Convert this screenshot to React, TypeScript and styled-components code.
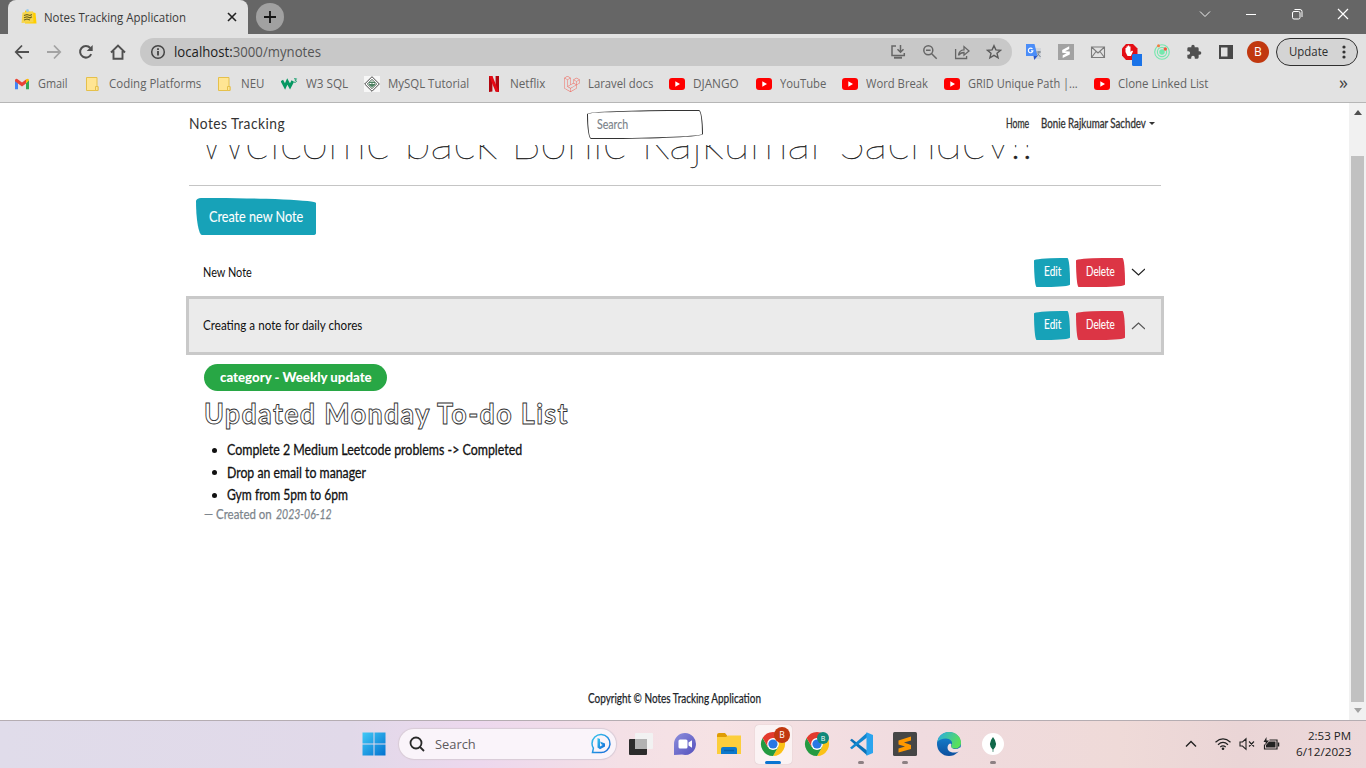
import React, { useLayoutEffect, useRef, useState } from "react";
import styled, { createGlobalStyle, css } from "styled-components";
import { FaLaravel } from "react-icons/fa";
import { VscVscode } from "react-icons/vsc";

const Global = createGlobalStyle`
  * { box-sizing: border-box; }
  html, body { margin: 0; padding: 0; overflow: hidden; }
  body { font-family: "Open Sans", "Noto Sans", sans-serif; width: 1366px; height: 768px; }
  svg { display: block; flex: none; }
`;

/* ---------- text that condenses to a given width ---------- */
const FitBox = styled.span<{ $w: number }>`
  display: inline-block;
  flex: none;
  width: ${(p) => p.$w}px;
  white-space: nowrap;
`;
const FitInner = styled.span`
  display: inline-block;
  transform-origin: 0 50%;
`;
function Fit({ w, children }: { w: number; children: React.ReactNode }) {
  const ref = useRef<HTMLSpanElement>(null);
  const [scale, setScale] = useState(1);
  useLayoutEffect(() => {
    if (ref.current) setScale(w / ref.current.offsetWidth);
  }, [w]);
  return (
    <FitBox $w={w}>
      <FitInner ref={ref} style={{ transform: `scaleX(${scale})` }}>
        {children}
      </FitInner>
    </FitBox>
  );
}

/* ---------- window frame ---------- */
const Screen = styled.div`
  width: 1366px;
  height: 768px;
  display: flex;
  flex-direction: column;
  background: #fff;
  overflow: hidden;
`;
const TitleBar = styled.div`
  height: 34px;
  flex: none;
  background: #666;
  display: flex;
  padding-left: 8px;
`;
const Tab = styled.div`
  width: 240px;
  height: 34px;
  background: #e2e2e2;
  border-radius: 8px 8px 0 0;
  display: flex;
  align-items: center;
  padding: 0 10px 0 13px;
  font-size: 12px;
  color: #3a3a3a;
  svg:last-child { margin-left: auto; }
  & > span { margin-left: 7px; }
`;
const NewTab = styled.div`
  width: 28px;
  height: 28px;
  margin: 3px 0 0 8px;
  border-radius: 50%;
  background: #a1a1a1;
  display: grid;
  place-items: center;
`;
const WindowControls = styled.div`
  margin-left: auto;
  height: 28px;
  display: grid;
  grid-template-columns: repeat(4, 46px);
  place-items: center;
`;
const ToolBar = styled.div`
  height: 35px;
  flex: none;
  background: #e2e2e2;
  display: flex;
  align-items: center;
  padding-left: 6px;
`;
const IconCell = styled.div`
  width: 32px;
  height: 28px;
  flex: none;
  display: grid;
  place-items: center;
`;
const Omnibox = styled.div`
  width: 872px;
  height: 28px;
  margin: 0 6px 0 6px;
  border-radius: 14px;
  background: #c8c8c8;
  display: flex;
  align-items: center;
  padding: 0 2px;
  font-size: 14px;
  color: #555;
  b { font-weight: 400; color: #1d1d1d; }
  ${IconCell}:nth-of-type(2) { margin-left: auto; }
`;
const Avatar = styled.div`
  width: 22px;
  height: 22px;
  border-radius: 50%;
  background: #c1380f;
  color: #fff;
  font-size: 12px;
  display: grid;
  place-items: center;
`;
const UpdatePill = styled.div`
  width: 82px;
  height: 28px;
  margin-left: 2px;
  border: 1px solid #2f2f2f;
  border-radius: 14px;
  background: #d4d4d4;
  display: flex;
  align-items: center;
  padding-left: 12px;
  gap: 14px;
  font-size: 12px;
  color: #2e2e2e;
`;
const Bookmarks = styled.div`
  height: 34px;
  flex: none;
  background: #e2e2e2;
  border-bottom: 1px solid #b6b6b6;
  display: flex;
  align-items: center;
  gap: 16px;
  padding: 0 18px 4px 14px;
`;
const Bookmark = styled.div`
  display: flex;
  align-items: center;
  gap: 8px;
  font-size: 12px;
  color: #636363;
`;
const More = styled.div`
  margin-left: auto;
  padding-bottom: 3px;
  font-size: 18px;
  line-height: 16px;
  color: #444;
`;

/* ---------- web page ---------- */
const Viewport = styled.div`
  height: 617px;
  flex: none;
  display: flex;
`;
const Page = styled.main`
  width: 1349px;
  display: flex;
  flex-direction: column;
  font-family: Lato, "Open Sans", sans-serif;
  color: #212529;
  overflow: hidden;
`;
const NavBar = styled.nav`
  height: 42px;
  flex: none;
  display: flex;
  align-items: center;
  padding: 0 194px 0 189px;
  background: #fff;
  z-index: 1;
`;
const Brand = styled.div`
  width: 398px;
  padding-bottom: 2px;
  font-size: 14.5px;
  letter-spacing: 0.5px;
  color: #333;
`;
const sketch = css`
  border-radius: 255px 25px 225px 25px / 25px 225px 25px 255px;
`;
const wideSketch = css`
  border-radius: 5px 112px 3px 6px / 3px 5px 2px 34px;
`;
const SearchInput = styled.div`
  width: 116px;
  height: 29px;
  border: 1px solid #333;
  border-radius: 100px 4px 100px 4px / 4px 24px 5px 24px;
  padding: 0 9px 1px;
  display: flex;
  align-items: center;
  font-size: 13px;
  color: #7b838a;
  -webkit-text-stroke: 0.15px #7b838a;
`;
const NavLinks = styled.div`
  margin-left: auto;
  display: flex;
  align-items: center;
  padding-bottom: 2px;
  font-size: 12.5px;
  color: #333;
  -webkit-text-stroke: 0.3px #333;
`;
const LinkGap = styled.i`
  width: 12px;
`;
const Caret = styled.i`
  margin-left: 3px;
  border: 3px solid transparent;
  border-top-color: #333;
  border-bottom: 0;
`;
const Scroller = styled.div`
  flex: 1;
  overflow: hidden;
  padding: 0 186px;
  display: flex;
  flex-direction: column;
`;
const Welcome = styled.h1`
  margin: -32px 0 0;
  padding-left: 13px;
  height: 72px;
  font-size: 47px;
  line-height: 56px;
  font-weight: 100;
  color: #222;
  -webkit-text-stroke: 0.35px #222;
`;
const Rule = styled.hr`
  width: 972px;
  height: 1px;
  margin: 0 3px 12px;
  border: 0;
  flex: none;
  background: #c5c5c5;
`;
const Button = styled.button<{ $kind: "info" | "danger"; $w: number; $big?: boolean }>`
  ${(p) => (p.$big ? wideSketch : sketch)}
  width: ${(p) => p.$w}px;
  height: ${(p) => (p.$big ? 37 : 29)}px;
  flex: none;
  padding: 0 0 2px;
  border: 0;
  color: #fff;
  background: ${(p) => (p.$kind === "info" ? "#17a2b8" : "#dc3545")};
  font-family: inherit;
  font-size: ${(p) => (p.$big ? 16 : 12.5)}px;
  -webkit-text-stroke: 0.1px #fff;
`;
const CreateArea = styled.div`
  padding-left: 10px;
  height: 50px;
  flex: none;
`;
const NoteRow = styled.div<{ $open?: boolean }>`
  height: ${(p) => (p.$open ? 59 : 48)}px;
  width: 978px;
  flex: none;
  border: 3px solid ${(p) => (p.$open ? "#c9c9c9" : "transparent")};
  background: ${(p) => (p.$open ? "#ebebeb" : "#fff")};
  display: flex;
  align-items: center;
  gap: 6px;
  padding: 0 16px 0 14px;
  font-size: 14px;
  color: #111;
  & > span { margin-right: auto; padding-bottom: 2px; }
`;
const NoteBody = styled.section`
  padding: 9px 18px 0;
  display: flex;
  flex-direction: column;
  align-items: flex-start;
`;
const Badge = styled.div`
  width: 183px;
  height: 27px;
  padding-bottom: 2px;
  border-radius: 14px;
  background: #28a745;
  color: #fff;
  font-size: 13.5px;
  font-weight: 900;
  display: grid;
  place-items: center;
`;
const NoteTitle = styled.h2`
  margin: 3px 0 0;
  font-size: 28px;
  letter-spacing: 1.4px;
  line-height: 38px;
  font-weight: 700;
  color: #fff;
  -webkit-text-stroke: 0.9px #333;
`;
const NoteList = styled.ul`
  margin: 7px 0 0;
  padding: 0;
  list-style: none;
  font-size: 15px;
  line-height: 22.6px;
  color: #111;
  -webkit-text-stroke: 0.3px #111;
`;
const NoteItem = styled.li`
  display: flex;
  align-items: center;
  height: 22.6px;
  & > span { padding-bottom: 1px; line-height: 21px; }
  &::before {
    content: "";
    width: 5px;
    height: 5px;
    margin: 0 10px 0 8px;
    border-radius: 50%;
    background: #111;
  }
`;
const Created = styled.footer`
  display: flex;
  gap: 4px;
  margin-top: -1px;
  font-size: 13.5px;
  line-height: 16px;
  color: #7d858c;
  -webkit-text-stroke: 0.25px #7d858c;
`;
const Copyright = styled.footer`
  margin-top: auto;
  height: 31px;
  padding-left: 402px;
  font-size: 12.5px;
  line-height: 20px;
  color: #212529;
  -webkit-text-stroke: 0.25px #212529;
`;
const ScrollBar = styled.div`
  width: 17px;
  background: #f1f1f1;
  display: flex;
  flex-direction: column;
  align-items: center;
  padding: 7px 0;
`;
const ScrollArrow = styled.i<{ $down?: boolean }>`
  border: 4px solid transparent;
  ${(p) => (p.$down ? "border-top: 5px solid #a3a3a3; border-bottom: 0;" : "border-bottom: 5px solid #505050; border-top: 0;")}
`;
const Thumb = styled.div`
  width: 13px;
  height: 546px;
  margin: 41px 0 6px;
  background: #c1c1c1;
`;

/* ---------- taskbar ---------- */
const TaskBar = styled.div`
  height: 48px;
  border-top: 1px solid #b5adb2;
  background: linear-gradient(90deg, #e0dcea 0, #e1d9e9 350px, #edd8ee 480px, #f4e0e6 620px, #f6e2e4 720px, #f0dbdf 920px, #efdad8 1120px, #ead5d6 1240px, #ecd8da 1366px);
  display: flex;
  align-items: center;
  padding: 0 0 1px 352px;
`;
const TaskSlot = styled.div<{ $active?: boolean }>`
  position: relative;
  width: 44px;
  height: 46px;
  display: grid;
  place-items: center;
  &::before {
    content: "";
    display: ${(p) => (p.$active ? "block" : "none")};
    position: absolute;
    inset: 4px 3px 3px 4px;
    border-radius: 4px;
    background: rgba(255, 255, 255, 0.6);
    box-shadow: 0 0 1px #b9a8ab;
  }
  svg { position: relative; }
`;
const Running = styled.i<{ $active?: boolean }>`
  position: absolute;
  bottom: 3px;
  left: ${(p) => (p.$active ? 14 : 19)}px;
  width: ${(p) => (p.$active ? 16 : 6)}px;
  height: 3px;
  border-radius: 2px;
  background: ${(p) => (p.$active ? "#0a74d1" : "#8d8083")};
`;
const TaskSearch = styled.div`
  width: 217px;
  height: 30px;
  margin: 0 3px 0 3px;
  border-radius: 16px;
  background: #faf4fa;
  box-shadow: 0 0 1px 1px #d8cbd6;
  display: flex;
  align-items: center;
  padding: 0 4px 0 10px;
  gap: 10px;
  font-size: 13.5px;
  color: #5d5a5d;
  svg:last-child { margin-left: auto; }
`;
const Tray = styled.div`
  margin-left: auto;
  padding-right: 15px;
  display: flex;
  align-items: center;
`;
const Clock = styled.div`
  margin-left: 16px;
  display: flex;
  flex-direction: column;
  align-items: flex-end;
  font-size: 11.5px;
  line-height: 16px;
  color: #222;
`;

/* ---------- icons ---------- */
type StrokeProps = { s?: number; c?: string; w?: number; box?: number; children: React.ReactNode };
const Stroke = ({ s = 16, c = "#505050", w = 1.8, box = 16, children }: StrokeProps) => (
  <svg width={s} height={s} viewBox={`0 0 ${box} ${box}`} fill="none" stroke={c} strokeWidth={w}>
    {children}
  </svg>
);
const YouTube = () => (
  <svg width="16" height="16" viewBox="0 0 16 16">
    <rect y="2" width="16" height="12" rx="3" fill="#f00" />
    <path d="M6.3 5.3v5.4L11 8z" fill="#fff" />
  </svg>
);
const Folder = () => (
  <svg width="16" height="16" viewBox="0 0 16 16">
    <path d="M1.5 1.500h10.500v9h1v4h-11.500z" fill="#ffe593" stroke="#e5c04b" />
    <path d="M10.500 14.500v-4H13v4z" fill="#ffe593" stroke="#e5c04b" />
  </svg>
);
const Gmail = () => (
  <svg width="16" height="16" viewBox="0 0 16 16">
    <path d="M1 4v9.2h3V7z" fill="#4285f4" />
    <path d="M12 7v6.2h3V4z" fill="#34a853" />
    <path d="M1 4.5Q1 2.2 3.3 2.9L8 6.6l4-3.2v4L8 10.4 1 5.2z" fill="#ea4335" />
    <path d="M12 3.3Q15 1.5 15 4.6L12 7.2z" fill="#fbbc04" />
  </svg>
);
const W3 = () => (
  <svg width="17" height="16" viewBox="0 0 17 16" fill="none" stroke="#059862">
    <path d="M.8 4.500 4 10.500 6.300 5.500 9 10.500 11.800 5" strokeWidth="2.900" />
    <path d="M13 2.800h2.500l-1.300 1.500c2.200 0 1.300 2.800-1.200 1.800" strokeWidth=".9" />
  </svg>
);
const MySql = () => (
  <svg width="16" height="16" viewBox="0 0 16 16">
    <rect width="16" height="16" fill="#f7f7f7" />
    <path d="M8 .7 15.3 8 8 15.3.7 8z" fill="#fff" stroke="#444" strokeWidth="1" />
    <path d="M8 3.200 12.800 8 8 12.800 3.200 8z" fill="#b9cdbf" stroke="#5d6a61" strokeWidth=".8" />
    <path d="M5 6h6v3L8 11 5 9z" fill="#4c8061" />
    <path d="M5.500 7h2v1h-2zm3 0h2v1h-2z" fill="#fff" />
  </svg>
);
const Netflix = () => (
  <svg width="16" height="16" viewBox="0 0 16 16">
    <path d="M3 0h3.400v15.500L3 16zM9.600 0H13v16l-3.400-.5z" fill="#b1060f" />
    <path d="M3 0h3.400L13 16l-3.500-.5z" fill="#e50914" />
  </svg>
);
const NoteFavicon = () => (
  <svg width="16" height="16" viewBox="0 0 16 16">
    <path d="M4 1.500 14.500 4l1 10.500L4 14.500z" fill="#ffcf00" />
    <path d="M1.500 3.500 12 2.200l.5 11L.5 14z" fill="#f6d54b" />
    <path d="m3 6.500 3-1 3 1 2-1M3 8.800l3-1 3 1 2-1M3 11l3-1 3 1" fill="none" stroke="#67601f" strokeWidth="1.100" />
    <circle cx="6.500" cy="1.600" r="1.500" fill="#9ccbea" />
  </svg>
);
const Chrome = ({ badge, label }: { badge: string; label: "lg" | "sm" }) => (
  <svg width="34" height="34" viewBox="0 0 34 34">
    <path d="M17 11h10.400a12 12 0 0 1-10.400 18l5.200-9z" fill="#fbc116" />
    <path d="M11.800 20 6.600 11A12 12 0 0 0 17 29l5.200-9z" fill="#249a41" />
    <path d="M6.600 11A12 12 0 0 1 27.400 11H17l-5.200 9z" fill="#e33b2e" />
    <circle cx="17" cy="17" r="5.900" fill="#fff" />
    <circle cx="17" cy="17" r="4.600" fill="#2877e4" />
    {label === "lg" ? (
      <>
        <circle cx="26" cy="8" r="8" fill={badge} />
        <text x="26" y="11" fontSize="8.500" fill="#fff" textAnchor="middle">B</text>
      </>
    ) : (
      <>
        <circle cx="23" cy="11" r="6" fill={badge} />
        <text x="23" y="13.500" fontSize="7" fill="#fff" textAnchor="middle">B</text>
      </>
    )}
  </svg>
);

const bookmarks: [React.ReactNode, string, number, number][] = [
  [<Gmail />, "Gmail", 30, 31],
  [<Folder />, "Coding Platforms", 92, 92],
  [<Folder />, "NEU", 23, 24],
  [<W3 />, "W3 SQL", 42, 42],
  [<MySql />, "MySQL Tutorial", 81, 82],
  [<Netflix />, "Netflix", 35, 38],
  [<FaLaravel size={16} color="#ef6a60" />, "Laravel docs", 65, 65],
  [<YouTube />, "DJANGO", 46, 47],
  [<YouTube />, "YouTube", 46, 46],
  [<YouTube />, "Word Break", 62, 62],
  [<YouTube />, "GRID Unique Path |...", 110, 110],
  [<YouTube />, "Clone Linked List", 90, 90],
];
const Slot = styled.div<{ $w: number }>`
  width: ${(p) => p.$w}px;
`;

function NoteHeader({ title, w, open }: { title: string; w: number; open?: boolean }) {
  return (
    <NoteRow $open={open}>
      <Fit w={w}>{title}</Fit>
      <Button $kind="info" $w={36}><Fit w={17}>Edit</Fit></Button>
      <Button $kind="danger" $w={49}><Fit w={29}>Delete</Fit></Button>
      <Stroke s={14} c={open ? "#555" : "#222"} w={1.2} box={14}>
        <path d={open ? "m1 10 6.500-6L14 10" : "m1 4 6.500 6L14 4"} />
      </Stroke>
    </NoteRow>
  );
}

export default function App() {
  return (
    <Screen>
      <Global />
      <TitleBar>
        <Tab>
          <NoteFavicon />
          <Fit w={142}>Notes Tracking Application</Fit>
          <Stroke s={12} c="#222" w={1.6} box={12}><path d="m2 2 8 8M10 2 2 10" /></Stroke>
        </Tab>
        <NewTab><Stroke s={14} c="#161616" w={1.8} box={14}><path d="M7 1v12M1 7h12" /></Stroke></NewTab>
        <WindowControls>
          <Stroke s={12} c="#eee" w={1} box={12}><path d="m1 3.500 5 5 5-5" /></Stroke>
          <Stroke s={12} c="#fff" w={1} box={12}><path d="M1 6.500h10" /></Stroke>
          <Stroke s={12} c="#fff" w={1} box={12}>
            <rect x="1.500" y="3.500" width="7.500" height="7.500" rx="1.500" />
            <path d="M3.500 1.500H9q2 0 2 2V9" />
          </Stroke>
          <Stroke s={12} c="#fff" w={1.2} box={12}><path d="m1 1 10 10M11 1 1 11" /></Stroke>
        </WindowControls>
      </TitleBar>
      <ToolBar>
        <IconCell><Stroke><path d="M15 8H2M8 1.500 1.800 8 8 14.500" /></Stroke></IconCell>
        <IconCell><Stroke c="#a3a3a3"><path d="M1 8h13M8 1.500 14.200 8 8 14.500" /></Stroke></IconCell>
        <IconCell>
          <Stroke w={2}><path d="M13.200 10.200A5.800 5.800 0 1 1 12.300 4" /><path d="M14.700 1v6H8.700z" fill="#505050" stroke="none" /></Stroke>
        </IconCell>
        <IconCell><Stroke w={1.9}><path d="M1 8.500 8 1.600l7 6.900M3.500 7v7.800h9V7" /></Stroke></IconCell>
        <Omnibox>
          <IconCell>
            <Stroke c="#444" w={1.5}><circle cx="8" cy="8" r="6.300" /><path d="M8 7v4.500M8 4.300v1.600" strokeWidth="1.800" /></Stroke>
          </IconCell>
          <Fit w={147}><b>localhost:</b>3000/mynotes</Fit>
          <IconCell>
            <Stroke c="#666" w={1.5}>
              <path d="M6 2H2v9.500h12.300V9" /><path d="M4 13.700h8" strokeWidth="2" /><path d="M10.500 1v7M7.500 5.200l3 3 3-3" />
            </Stroke>
          </IconCell>
          <IconCell>
            <Stroke c="#666" w={1.5}><circle cx="6.300" cy="6.300" r="4.500" /><path d="m9.700 9.700 5 5M4 6.300h4.600" /></Stroke>
          </IconCell>
          <IconCell>
            <Stroke c="#666" w={1.3}>
              <path d="M1.600 5v9.500h11V12M4.500 11.400c.4-4 2.400-5.500 5.500-5.600V2.600l5 4.400-5 4.200V8.500C7.500 8.500 6 9 4.500 11.400z" />
            </Stroke>
          </IconCell>
          <IconCell>
            <Stroke c="#5a5a5a" w={1.4}><path d="m8 1.700 1.900 4.200 4.600.4-3.500 3 1.100 4.500L8 11.400 3.900 13.800 5 9.300l-3.500-3 4.600-.4z" /></Stroke>
          </IconCell>
        </Omnibox>
        <IconCell>
          <svg width="16" height="16" viewBox="0 0 16 16">
            <path d="M6 4h9v11H9z" fill="#d2d5da" />
            <path d="M0 0h8.500l3 12H0z" fill="#4b8df8" />
            <path d="M7.500 12h4l-3.300 4z" fill="#2a56c6" />
            <path d="M6.500 5a2.300 2.300 0 1 0 .4 1.900H5" stroke="#fff" fill="none" strokeWidth="1.100" />
            <path d="M10.500 8H15M13 7v1c0 2-1 3.500-2 4M11.500 9.500l3 3.500" stroke="#77808a" fill="none" />
          </svg>
        </IconCell>
        <IconCell>
          <svg width="16" height="16" viewBox="0 0 16 16">
            <rect width="16" height="16" fill="#a2a2a2" />
            <path d="m4.200 6 7-3.700v2.700L7 7.200l4.800.4v2.800L4.700 14v-2.700l4-2.100-4.500-.5z" fill="#fff" />
          </svg>
        </IconCell>
        <IconCell><Stroke c="#7b7b7b" w={1.1}><path d="M1.500 3h13v10.500h-13zM1.500 3 8 9l6.500-6M1.500 13.500 6 7.500M14.500 13.500 10 7.500" /></Stroke></IconCell>
        <IconCell>
          <svg width="24" height="28" viewBox="0 0 24 28">
            <path d="M8 6h7l4.500 4.500v6.500L15 22H8l-4-4.500v-7z" fill="#e40d14" />
            <path d="M7.500 14v-4h1v3V8.500h1.300V13 7.500h1.400V13 8.500h1.300V14l1.500-1.500 1 .8L13 18H9.500z" fill="#fff" />
            <rect x="14" y="16" width="12" height="12" rx="1.500" fill="#1a73e8" />
          </svg>
        </IconCell>
        <IconCell>
          <svg width="16" height="16" viewBox="0 0 16 16" fill="none" stroke="#73e8ad" strokeWidth="1.100">
            <circle cx="8" cy="8" r="7.300" /><circle cx="8" cy="8" r="4.600" /><circle cx="8" cy="8" r="2.200" fill="#73e8ad" />
            <circle cx="4.500" cy="1.700" r="1.500" fill="#f47b3e" stroke="none" /><circle cx="11.300" cy="5" r="1.700" fill="#f0583b" stroke="none" />
          </svg>
        </IconCell>
        <IconCell>
          <svg width="16" height="16" viewBox="0 0 24 24" fill="#505050">
            <path d="M20.500 11H19V7a2 2 0 0 0-2-2h-4V3.500a2.500 2.500 0 0 0-5 0V5H4a2 2 0 0 0-2 2v3.800h1.500a2.700 2.700 0 0 1 0 5.400H2V20a2 2 0 0 0 2 2h3.800v-1.500a2.700 2.700 0 0 1 5.400 0V22H17a2 2 0 0 0 2-2v-4h1.500a2.500 2.500 0 0 0 0-5z" />
          </svg>
        </IconCell>
        <IconCell>
          <svg width="16" height="16" viewBox="0 0 16 16" fill="#484848"><path fillRule="evenodd" d="M1 1h14v14H1zM3 3.500v9h6.500v-9z" /></svg>
        </IconCell>
        <IconCell><Avatar>B</Avatar></IconCell>
        <UpdatePill>
          <Fit w={39}>Update</Fit>
          <svg width="4" height="16" viewBox="0 0 4 16" fill="#333"><circle cx="2" cy="3" r="1.600" /><circle cx="2" cy="8" r="1.600" /><circle cx="2" cy="13" r="1.600" /></svg>
        </UpdatePill>
      </ToolBar>
      <Bookmarks>
        {bookmarks.map(([icon, label, w, slot]) => (
          <Bookmark key={label}>
            {icon}
            <Slot $w={slot}><Fit w={w}>{label}</Fit></Slot>
          </Bookmark>
        ))}
        <More>»</More>
      </Bookmarks>

      <Viewport>
        <Page>
          <NavBar>
            <Brand><Fit w={96}>Notes Tracking</Fit></Brand>
            <SearchInput><Fit w={31}>Search</Fit></SearchInput>
            <NavLinks>
              <Fit w={23}>Home</Fit>
              <LinkGap />
              <Fit w={105}>Bonie Rajkumar Sachdev</Fit>
              <Caret />
            </NavLinks>
          </NavBar>
          <Scroller>
            <Welcome><Fit w={834}>Welcome back Bonie Rajkumar Sachdev!!</Fit></Welcome>
            <Rule />
            <CreateArea>
              <Button $kind="info" $w={120} $big><Fit w={94}>Create new Note</Fit></Button>
            </CreateArea>
            <NoteHeader title="New Note" w={49} />
            <NoteHeader title="Creating a note for daily chores" w={159} open />
            <NoteBody>
              <Badge><Fit w={152}>category - Weekly update</Fit></Badge>
              <NoteTitle><Fit w={365}>Updated Monday To-do List</Fit></NoteTitle>
              <NoteList>
                <NoteItem><Fit w={295}>Complete 2 Medium Leetcode problems -&gt; Completed</Fit></NoteItem>
                <NoteItem><Fit w={139}>Drop an email to manager</Fit></NoteItem>
                <NoteItem><Fit w={121}>Gym from 5pm to 6pm</Fit></NoteItem>
              </NoteList>
              <Created>
                <Fit w={68}>— Created on</Fit>
                <Fit w={56}><em>2023-06-12</em></Fit>
              </Created>
            </NoteBody>
            <Copyright><Fit w={173}>Copyright © Notes Tracking Application</Fit></Copyright>
          </Scroller>
        </Page>
        <ScrollBar><ScrollArrow /><Thumb /><ScrollArrow $down /></ScrollBar>
      </Viewport>

      <TaskBar>
        <TaskSlot>
          <svg width="24" height="24" viewBox="0 0 24 24">
            <defs><linearGradient id="win" gradientUnits="userSpaceOnUse" x1="0" y1="0" x2="24" y2="24"><stop stopColor="#42cbf7" /><stop offset="1" stopColor="#0070cf" /></linearGradient></defs>
            <path d="M.5.5h11v11H.5zM12.500.5h11v11h-11zM.5 12.500h11v11H.5zM12.500 12.500h11v11h-11z" fill="url(#win)" />
          </svg>
        </TaskSlot>
        <TaskSearch>
          <Stroke s={16} c="#292929" w={1.8}><circle cx="7" cy="7" r="5.500" /><path d="m11 11 4 4" /></Stroke>
          <Fit w={41}>Search</Fit>
          <svg width="22" height="22" viewBox="0 0 22 22" fill="none">
            <defs><linearGradient id="bing" x2="1" y2="1"><stop stopColor="#35c5ed" /><stop offset="1" stopColor="#1466d8" /></linearGradient></defs>
            <path d="M2.500 19.500H10A9 9 0 1 0 2 10.500q0 2.300 1.400 4.600z" stroke="url(#bing)" strokeWidth="1.500" />
            <path d="M7.500 5v9.500l2.500 1.800 5-2.700v-3L10 8.500l1 2.600 1.600.8-2.600 1.600V6z" fill="url(#bing)" />
          </svg>
        </TaskSearch>
        <TaskSlot>
          <svg width="24" height="24" viewBox="0 0 24 24">
            <rect x="6" y="1" width="18" height="16" rx="1" fill="#f2f2f2" />
            <rect y="7" width="18" height="16" rx="1" fill="#2c2c2c" />
            <path d="M6 7h12v10H6z" fill="#b2b2b2" />
          </svg>
        </TaskSlot>
        <TaskSlot>
          <svg width="24" height="24" viewBox="0 0 24 24">
            <defs><linearGradient id="chat" x2="1" y2="1"><stop stopColor="#8d8fdc" /><stop offset="1" stopColor="#5550bd" /></linearGradient></defs>
            <path d="M12 1a11 11 0 1 1-3 21.600L1 23V12A11 11 0 0 1 12 1z" fill="url(#chat)" />
            <rect x="5.500" y="7.500" width="9" height="9" rx="1.500" fill="#fff" /><path d="m15.500 10.500 3.500-2.300v7.600l-3.500-2.300z" fill="#fff" />
          </svg>
        </TaskSlot>
        <TaskSlot>
          <svg width="24" height="24" viewBox="0 0 24 24">
            <path d="M0 3q0-2 2-2h6l2.500 3H24v8H0z" fill="#df9c05" />
            <path d="M0 5h9l2-1.500h13V22H0z" fill="#fcce3c" />
            <path d="M4 22v-5q0-2 2-2h12q2 0 2 2v5z" fill="#0d79cd" /><path d="M7 18.500h10" stroke="#0961a8" strokeWidth="1.500" />
          </svg>
        </TaskSlot>
        <TaskSlot $active><Chrome badge="#c1380f" label="lg" /><Running $active /></TaskSlot>
        <TaskSlot><Chrome badge="#10897a" label="sm" /></TaskSlot>
        <TaskSlot>
          <svg width="24" height="24" viewBox="0 0 24 24">
            <path d="M1 8.200 2.800 6.700 18 18.500v4.700z" fill="#0a72b8" />
            <path d="M1 15.800l1.800 1.500L18 5.500V.8z" fill="#1287cf" />
            <path d="M17.500.3 24 3v18l-6.500 2.700z" fill="#2ba4ee" />
          </svg>
          <Running />
        </TaskSlot>
        <TaskSlot>
          <svg width="24" height="24" viewBox="0 0 24 24">
            <rect width="24" height="24" rx="1.500" fill="#464646" />
            <path d="m5.500 8.500 12.500-4v4L11 10.600l7 2.400v4L5.500 20.500v-4l6.500-2-6.500-2z" fill="#ff9800" />
          </svg>
          <Running />
        </TaskSlot>
        <TaskSlot>
          <svg width="24" height="24" viewBox="0 0 24 24">
            <defs>
              <linearGradient id="edgeA" x2="1" y2=".4"><stop stopColor="#2aa9e8" /><stop offset="1" stopColor="#59e05b" /></linearGradient>
              <linearGradient id="edgeB" x2="0" y2="1"><stop stopColor="#1689d6" /><stop offset="1" stopColor="#0c4f9e" /></linearGradient>
            </defs>
            <circle cx="12" cy="12" r="12" fill="url(#edgeB)" />
            <path d="M.3 10C2 2 8 0 12 0c7 0 12 5 12 10.500 0 4-3 6-6 6-3.500 0-4.500-1.500-3.500-3 2-4-1.500-7-5.500-7-4 0-7 1.500-8.700 3.500z" fill="url(#edgeA)" />
            <path d="M14.300 12.800c-1 2.500 1 4.200 4 4.200q2.500 0 4.500-1.500H24v2l-2 2c-2 1-8 2-10.500-1-2-3-.5-6 1.500-7 1 .3 1.700.8 1.300 1.300z" fill="#f2dfe2" />
          </svg>
        </TaskSlot>
        <TaskSlot>
          <svg width="24" height="24" viewBox="0 0 24 24">
            <circle cx="12" cy="12" r="11" fill="#fff" /><path d="M12 5q5.800 7 .4 12.500l-.1 2.500h-.6l-.1-2.500Q6.200 12 12 5z" fill="#11684a" />
          </svg>
          <Running />
        </TaskSlot>
        <Tray>
          <Stroke s={12} c="#222" w={1.4} box={12}><path d="m1 8.500 5-5 5 5" /></Stroke>
          <Slot $w={18} />
          <Stroke s={16} c="#222" w={1.2}>
            <path d="M.5 6.200q7.500-6.500 15 0M3 8.700q5-4.500 10 0M5.300 11q2.700-2.300 5.400 0" /><circle cx="8" cy="12.800" r="1.300" fill="#222" stroke="none" />
          </Stroke>
          <Slot $w={8} />
          <Stroke s={16} c="#222" w={1.1}><path d="M1 6h2.500L7 2.800v10.500L3.500 10H1zM10 5.500l5 5M15 5.500l-5 5" /></Stroke>
          <Slot $w={8} />
          <svg width="17" height="14" viewBox="0 0 17 14" fill="none" stroke="#222">
            <path d="M6.500 3H14v9H1.500V7.500" strokeWidth="1.200" /><path d="M6 4.500h6.500v6H3V8z" fill="#222" stroke="none" /><path d="M15.500 5.500v4" strokeWidth="1.500" />
            <path d="M3.500 0 .5 5h2.300L2 8.500 6 3.500H3.500z" fill="#222" stroke="none" />
          </svg>
          <Clock><Fit w={43}>2:53 PM</Fit><Fit w={55}>6/12/2023</Fit></Clock>
        </Tray>
      </TaskBar>
    </Screen>
  );
}
